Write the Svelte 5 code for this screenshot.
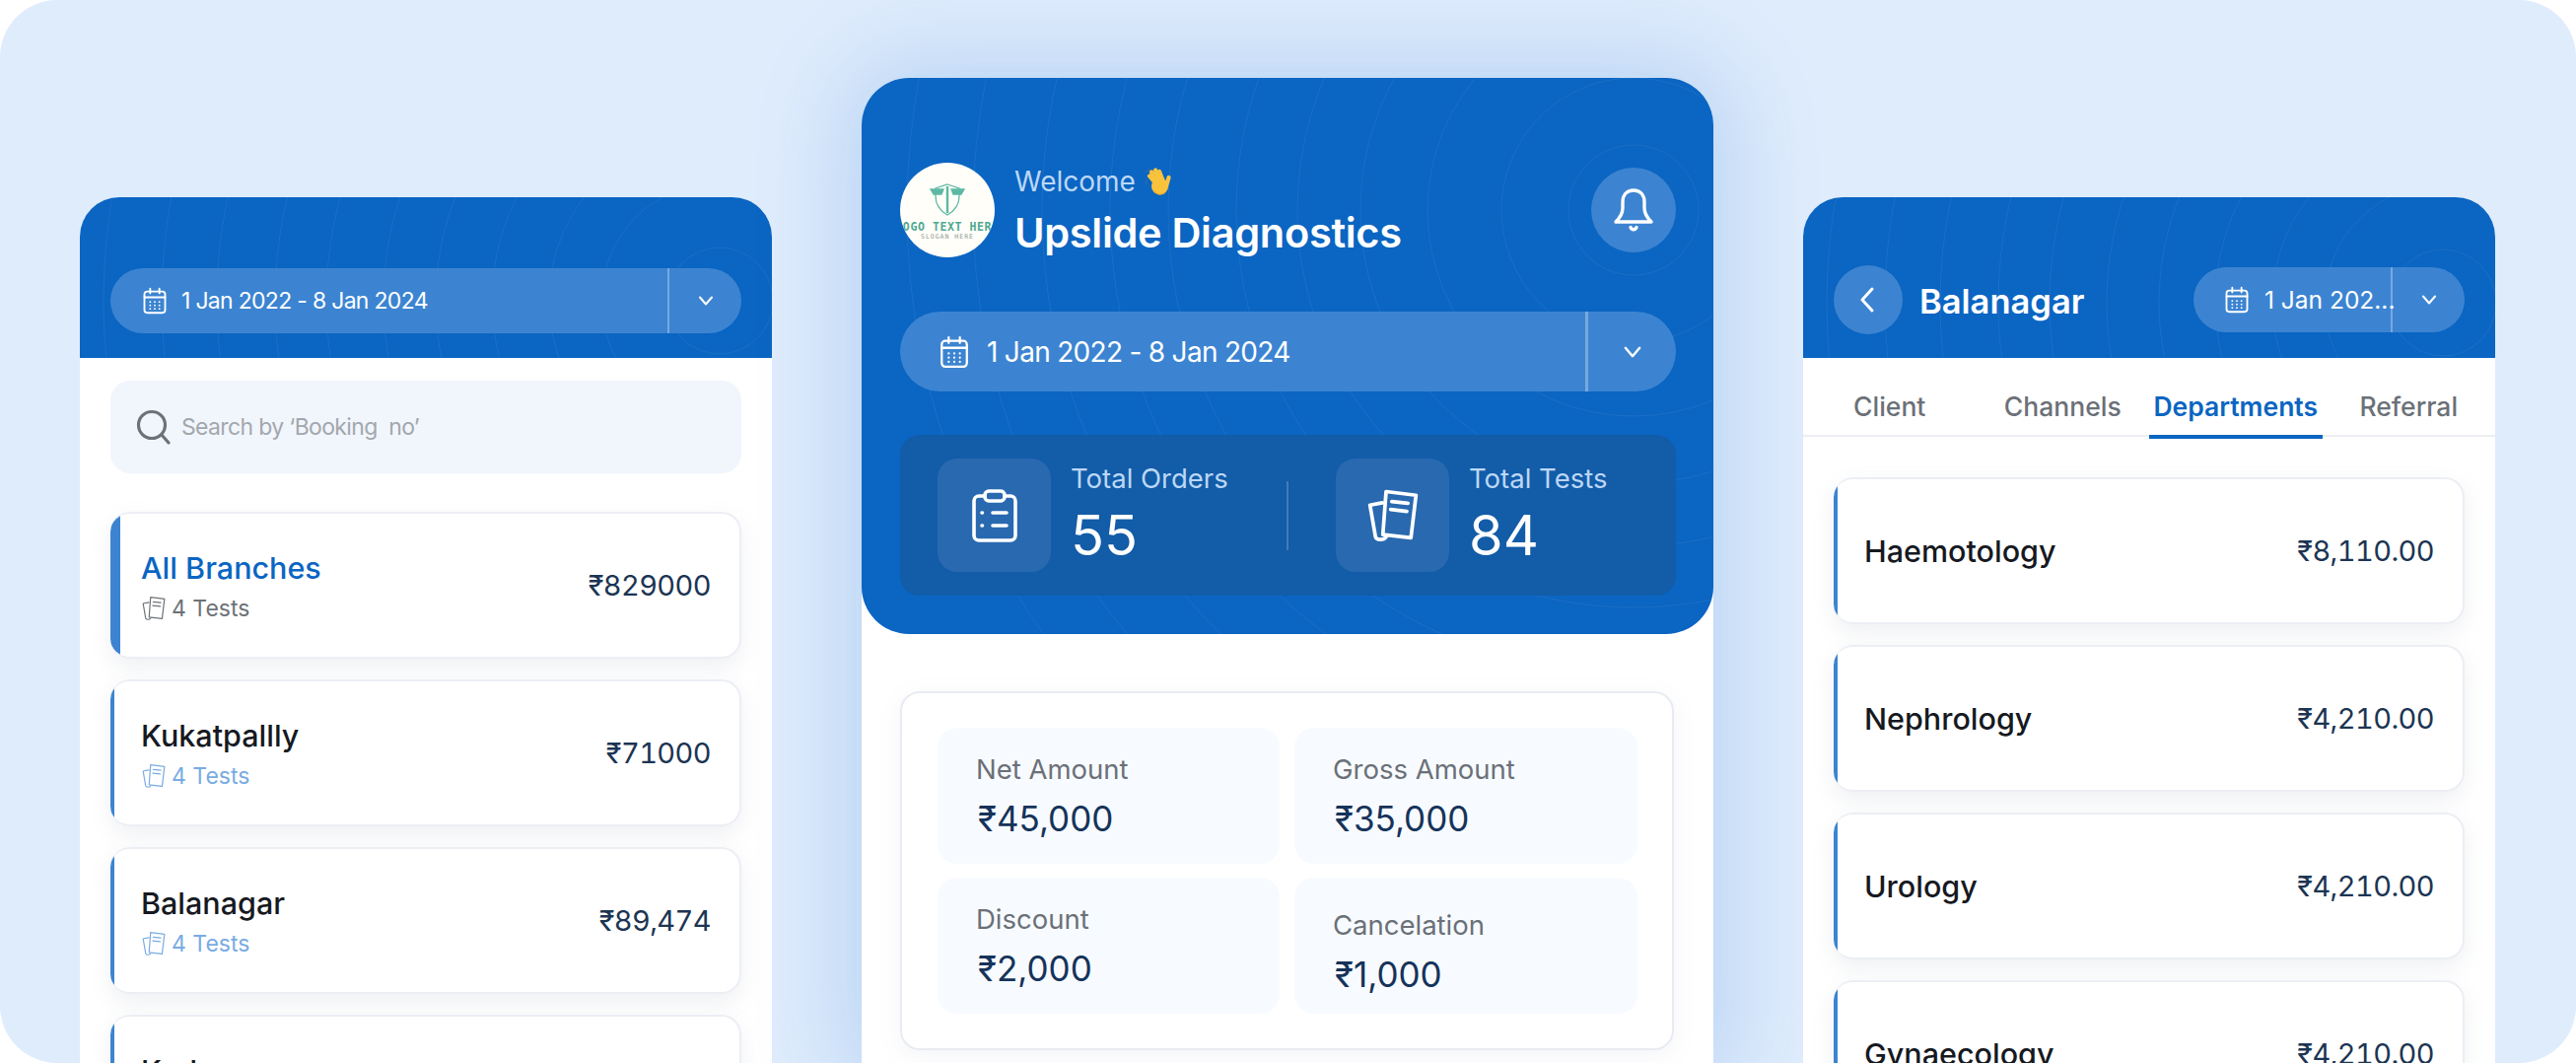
<script>
  const branches = [
    { name: 'All Branches', amount: '₹829000', active: true },
    { name: 'Kukatpallly', amount: '₹71000' },
    { name: 'Balanagar', amount: '₹89,474' },
    { name: 'Kodur', amount: '' }
  ];
  const departments = [
    { name: 'Haemotology', amount: '₹8,110.00' },
    { name: 'Nephrology', amount: '₹4,210.00' },
    { name: 'Urology', amount: '₹4,210.00' },
    { name: 'Gynaecology', amount: '₹4,210.00' }
  ];
  const tabs = ['Client', 'Channels', 'Departments', 'Referral'];
  const amounts = [
    { label: 'Net Amount', value: '₹45,000' },
    { label: 'Gross Amount', value: '₹35,000' },
    { label: 'Discount', value: '₹2,000' },
    { label: 'Cancelation', value: '₹1,000', low: true }
  ];
  const sideRings = [54, 120, 173, 231, 288, 341, 399, 451, 510, 566, 625];
  const mainRings = [66, 134, 209, 277, 341, 403, 472, 531, 600, 670, 737];
</script>

{#snippet calendar(size)}
  <svg class="cal" width={size} height={size} viewBox="0 0 24 24" fill="none" stroke="currentColor" stroke-width="1.6" stroke-linecap="round">
    <rect x="3" y="4" width="18" height="18.5" rx="2.5" />
    <path d="M3 9h18M8 1.5v4M16 1.5v4" />
    <path d="M8 13h.01M12 13h.01M16 13h.01M8 16h.01M12 16h.01M16 16h.01M8 19h.01M12 19h.01M16 19h.01" stroke-width="1.6" />
  </svg>
{/snippet}

{#snippet chevron(size)}
  <svg width={size} height={size} viewBox="0 0 20 20" fill="none" stroke="currentColor" stroke-width="2" stroke-linecap="round" stroke-linejoin="round">
    <path d="M4 6.5l6 7 6-7" />
  </svg>
{/snippet}

{#snippet papers(size, sw)}
  <svg width={size} height={size} viewBox="0 0 24 24" fill="none" stroke="currentColor" stroke-width={sw} stroke-linejoin="round" stroke-linecap="round">
    <path d="M9 1.5l13 1.6-2.2 18.5L7.6 20.2z" />
    <path d="M11.5 5.8l7 .8M11 9.3l7 .8" />
    <path d="M7.4 6.4L2 7.4l2.4 13.8c.3 1.5 3.6 1.6 4.6 0" />
  </svg>
{/snippet}

{#snippet rings(list, cx, cy, w, h)}
  <svg class="rings" width={w} height={h} viewBox={`0 0 ${w} ${h}`} fill="none" stroke="#fff" stroke-opacity=".065">
    {#each list as r}
      <circle {cx} {cy} {r} />
    {/each}
  </svg>
{/snippet}

<div class="frame">
  <section class="phone side">
    <header class="head head-side">
      {@render rings(sideRings, 649, 105, 702, 163)}
      <div class="pill">
        <div class="pill-main">
          {@render calendar(28)}
          <span>1 Jan 2022 - 8 Jan 2024</span>
        </div>
        <div class="pill-arrow">{@render chevron(20)}</div>
      </div>
    </header>
    <div class="body">
      <div class="search">
        <svg width="36" height="36" viewBox="0 0 36 36" fill="none" stroke="#6d7277" stroke-width="3.2" stroke-linecap="round">
          <circle cx="16" cy="16" r="13.5" />
          <path d="M26 26l7 8" />
        </svg>
        <span>Search by ‘Booking&nbsp; no’</span>
      </div>
      <div class="list">
        {#each branches as b}
          <div class="row branch" class:active={b.active}>
            <div>
              <div class="row-name">{b.name}</div>
              <div class="tests">{@render papers(26, 1.1)}<span>4 Tests</span></div>
            </div>
            <div class="row-amount">{b.amount}</div>
          </div>
        {/each}
      </div>
    </div>
  </section>

  <section class="phone main">
    <header class="head head-main">
      {@render rings(mainRings, 783, 134, 864, 564)}
      <div class="top">
        <div class="logo">
          <svg width="36" height="36" viewBox="0 0 36 36" fill="none" stroke="#5db8a3" stroke-width="1.3">
            <path d="M18 2l12 4v8c0 9-5 15-12 19C11 29 6 23 6 14V6z" />
            <path d="M1 7h13l-2 5H4zM35 7H22l2 5h8z" fill="#5db8a3" />
            <path d="M18 4v27" stroke-width="2.4" />
          </svg>
          <span class="logo-name">LOGO TEXT HERE</span>
          <span class="logo-slogan">SLOGAN HERE</span>
        </div>
        <div class="hello">
          <div class="welcome">
            Welcome
            <svg width="28" height="30" viewBox="0 0 28 30" fill="none" stroke-linecap="round">
              <path d="M3 13c-1 2-1 4 0 5M6 3C4 3 3 4 2 6" stroke="#3d6fa8" stroke-width="1" />
              <circle cx="16.5" cy="20" r="8.5" fill="#f9c23c" />
              <path d="M14 19L6 9.5M16 16L8 5.5M18 15l-6-11.5M20 15L16 5M23 20l2.5-9" stroke="#f9c23c" stroke-width="4.2" />
              <path d="M11 25c2 3 6 4 10 2" stroke="#e9a52c" stroke-width="1.2" />
            </svg>
          </div>
          <div class="org">Upslide Diagnostics</div>
        </div>
        <button class="bell" type="button" aria-label="Notifications">
          <svg width="42" height="48" viewBox="0 0 42 48" fill="none" stroke="#fff" stroke-width="3.4" stroke-linejoin="round" stroke-linecap="round">
            <path d="M21 4c-7 0-11 5-11 12v6c0 6-3 10-7 14h36c-4-4-7-8-7-14v-6c0-7-4-12-11-12z" />
            <path d="M18 41.5c1 3 5 3 6 0" />
          </svg>
        </button>
      </div>
      <div class="pill pill-large">
        <div class="pill-main">
          {@render calendar(34)}
          <span>1 Jan 2022 - 8 Jan 2024</span>
        </div>
        <div class="pill-arrow">{@render chevron(24)}</div>
      </div>
      <div class="stats">
        <div class="stat">
          <div class="tile">
            <svg width="46" height="54" viewBox="0 0 46 54" fill="none" stroke="#fff" stroke-width="3.6" stroke-linecap="round" stroke-linejoin="round">
              <path d="M13 7H7a5 5 0 0 0-5 5v35a5 5 0 0 0 5 5h32a5 5 0 0 0 5-5V12a5 5 0 0 0-5-5h-6" />
              <rect x="13" y="2" width="20" height="10" rx="4" />
              <path d="M21 24h14M21 37h14M10 24h.5M10 37h.5" />
            </svg>
          </div>
          <div class="stat-text">
            <div class="stat-label">Total Orders</div>
            <div class="stat-value">55</div>
          </div>
        </div>
        <div class="stat-rule"></div>
        <div class="stat">
          <div class="tile">{@render papers(56, 1.6)}</div>
          <div class="stat-text">
            <div class="stat-label">Total Tests</div>
            <div class="stat-value">84</div>
          </div>
        </div>
      </div>
    </header>
    <div class="summary-wrap">
      <div class="summary">
        {#each amounts as a}
          <div class="amount" class:low={a.low}>
            <div class="amount-label">{a.label}</div>
            <div class="amount-value">{a.value}</div>
          </div>
        {/each}
      </div>
    </div>
  </section>

  <section class="phone side">
    <header class="head head-dept">
      {@render rings(sideRings, 649, 107, 702, 163)}
      <button class="back" type="button" aria-label="Back">
        <svg width="22" height="30" viewBox="0 0 22 30" fill="none" stroke="#fff" stroke-width="3" stroke-linecap="round" stroke-linejoin="round">
          <path d="M15 4L5 15l10 11" />
        </svg>
      </button>
      <div class="dept-title">Balanagar</div>
      <div class="pill pill-small">
        <div class="pill-main">
          {@render calendar(28)}
          <span>1 Jan 202...</span>
        </div>
        <div class="pill-arrow">{@render chevron(20)}</div>
      </div>
    </header>
    <nav class="tabs">
      {#each tabs as t}
        <div class="tab" class:current={t === 'Departments'}>{t}</div>
      {/each}
    </nav>
    <div class="list dept-list">
      {#each departments as d}
        <div class="row">
          <div class="row-name">{d.name}</div>
          <div class="row-amount">{d.amount}</div>
        </div>
      {/each}
    </div>
  </section>
</div>

<style>
  :global(body) {
    margin: 0;
    background: #fff;
  }

  .frame {
    width: 2613px;
    height: 1078px;
    box-sizing: border-box;
    padding: 0 82px 0 81px;
    display: flex;
    justify-content: space-between;
    align-items: flex-start;
    background: #dfecfc;
    border-radius: 58px;
    overflow: hidden;
    font-family: Inter, "Noto Sans", sans-serif;
    color: #16191f;
  }

  .phone {
    position: relative;
    flex: none;
    background: #fff;
    overflow: hidden;
    border-radius: 40px 40px 0 0;
  }
  .side {
    width: 702px;
    height: 878px;
    margin-top: 200px;
  }
  .main {
    width: 864px;
    height: 999px;
    margin-top: 79px;
    border-radius: 48px 48px 0 0;
    overflow: visible;
    box-shadow: 0 0 90px 20px rgba(40, 120, 215, 0.2);
  }

  .head {
    position: relative;
    background: #0b65c2;
    overflow: hidden;
    box-sizing: border-box;
  }
  .head > :global(*) {
    position: relative;
  }
  .head > :global(.rings) {
    position: absolute;
    left: 0;
    top: 0;
  }
  .head-side {
    height: 163px;
    padding: 72px 31px 0;
  }
  .head-main {
    height: 564px;
    padding: 86px 38px 0 39px;
    border-radius: 48px;
  }
  .head-dept {
    height: 163px;
    padding: 69px 31px 0;
    display: flex;
    align-items: flex-start;
  }

  .pill {
    display: flex;
    height: 66px;
    border-radius: 33px;
    background: #3c84d1;
    color: #fff;
    font-size: 23px;
    letter-spacing: -0.7px;
  }
  .pill-main {
    flex: 1;
    min-width: 0;
    display: flex;
    align-items: center;
    gap: 13px;
    padding-left: 31px;
    white-space: nowrap;
  }
  .pill-arrow {
    flex: none;
    width: 75px;
    box-sizing: border-box;
    border-left: 2px solid rgba(255, 255, 255, 0.3);
    display: flex;
    align-items: center;
    justify-content: center;
  }
  .pill-large {
    height: 81px;
    border-radius: 41px;
    font-size: 28px;
    margin-top: 55px;
  }
  .pill-large .pill-main {
    padding-left: 38px;
    gap: 16px;
  }
  .pill-large .pill-arrow {
    width: 92px;
    border-left-width: 3px;
  }
  .pill-small {
    width: 275px;
    margin-left: auto;
    margin-top: 2px;
    font-size: 24.5px;
    letter-spacing: 0;
  }
  .pill-small .pill-main {
    padding-left: 30px;
    gap: 14px;
  }
  .cal {
    flex: none;
  }

  .top {
    display: flex;
    align-items: center;
    height: 96px;
  }
  .logo {
    flex: none;
    width: 96px;
    height: 96px;
    border-radius: 50%;
    background: #fffef8;
    overflow: hidden;
    display: flex;
    flex-direction: column;
    align-items: center;
    padding-top: 20px;
    box-sizing: border-box;
    white-space: nowrap;
  }
  .logo-name {
    font-family: "DejaVu Sans Mono", monospace;
    font-size: 11.5px;
    font-weight: 700;
    line-height: 12px;
    letter-spacing: 0.6px;
    color: #4fa893;
    margin-top: 3px;
  }
  .logo-slogan {
    font-family: "DejaVu Sans Mono", monospace;
    font-size: 6.5px;
    line-height: 8px;
    letter-spacing: 1px;
    color: #8f9a97;
  }
  .hello {
    margin-left: 20px;
  }
  .welcome {
    display: flex;
    align-items: center;
    gap: 8px;
    font-size: 28px;
    line-height: 36px;
    color: #bcd7f6;
  }
  .org {
    margin-top: 9px;
    font-size: 41.5px;
    line-height: 50px;
    font-weight: 600;
    letter-spacing: -0.3px;
    color: #fff;
  }
  .bell {
    margin-left: auto;
    width: 86px;
    height: 86px;
    padding: 0;
    border: 0;
    border-radius: 50%;
    background: #3c84d1;
    display: flex;
    align-items: center;
    justify-content: center;
  }

  .stats {
    margin-top: 44px;
    height: 163px;
    border-radius: 20px;
    background: #125ca8;
    display: flex;
    align-items: center;
    padding: 0 38px;
  }
  .stat {
    display: flex;
    align-items: center;
    gap: 20px;
  }
  .stat:first-child {
    width: 354px;
  }
  .stat-text {
    padding-bottom: 3px;
  }
  .stat-rule {
    width: 2px;
    height: 70px;
    background: rgba(255, 255, 255, 0.2);
    margin-right: 48px;
  }
  .tile {
    flex: none;
    width: 115px;
    height: 115px;
    border-radius: 20px;
    background: #2969b0;
    color: #fff;
    display: flex;
    align-items: center;
    justify-content: center;
  }
  .stat-label {
    font-size: 27.5px;
    line-height: 36px;
    color: #bcd7f6;
  }
  .stat-value {
    font-size: 56px;
    line-height: 64px;
    margin-top: 8px;
    color: #fff;
  }

  .summary-wrap {
    padding: 58px 40px 0 39px;
  }
  .summary {
    box-sizing: border-box;
    height: 364px;
    padding: 35px 36px 0;
    border: 2px solid #e8ebf2;
    border-radius: 20px;
    background: #fff;
    box-shadow: 0 6px 24px rgba(120, 130, 160, 0.08);
    display: grid;
    grid-template-columns: 347px 348px;
    grid-template-rows: 138px 138px;
    column-gap: 15px;
    row-gap: 14px;
  }
  .amount {
    box-sizing: border-box;
    padding: 24px 39px 0;
    background: #f7fbff;
    border-radius: 20px;
  }
  .amount.low {
    padding-top: 30px;
  }
  .amount-label {
    font-size: 27.5px;
    line-height: 36px;
    color: #6b7078;
  }
  .amount-value {
    margin: 10px 0 0 2px;
    font-size: 35px;
    line-height: 44px;
    color: #16335a;
  }

  .body {
    padding: 23px 31px 0;
  }
  .search {
    height: 94px;
    box-sizing: border-box;
    padding-left: 26px;
    border-radius: 20px;
    background: #f1f6fd;
    display: flex;
    align-items: center;
    gap: 10px;
    font-size: 23px;
    letter-spacing: -0.65px;
    color: #a3a7ac;
  }
  .list {
    display: flex;
    flex-direction: column;
    gap: 21px;
    margin-top: 39px;
  }
  .dept-list {
    margin: 41px 31px 0;
  }
  .row {
    flex: none;
    box-sizing: border-box;
    height: 149px;
    padding: 0 29px 0 31px;
    border: 2px solid #eceef4;
    border-left: 0;
    border-radius: 20px;
    background: linear-gradient(90deg, #3c84d1 4px, #fff 4px);
    box-shadow: 0 8px 22px rgba(120, 130, 160, 0.12);
    display: flex;
    align-items: center;
    justify-content: space-between;
  }
  .branch.active {
    background: linear-gradient(90deg, #3c84d1 10px, #fff 10px);
  }
  .row-name {
    font-size: 30.5px;
    line-height: 40px;
    font-weight: 500;
  }
  .row-amount {
    font-size: 29px;
    letter-spacing: -0.6px;
    font-variant-numeric: tabular-nums;
    color: #1c3553;
  }
  .active .row-name {
    color: #0b65c2;
  }
  .tests {
    display: flex;
    align-items: center;
    gap: 5px;
    margin-top: 7px;
    font-size: 23px;
    line-height: 28px;
    color: #79abe3;
  }
  .active .tests {
    color: #6d7277;
  }

  .back {
    flex: none;
    width: 70px;
    height: 70px;
    padding: 0;
    border: 0;
    border-radius: 50%;
    background: #3c84d1;
    display: flex;
    align-items: center;
    justify-content: center;
  }
  .dept-title {
    margin-left: 17px;
    font-size: 34.5px;
    line-height: 74px;
    font-weight: 600;
    color: #fff;
  }

  .tabs {
    height: 80px;
    box-sizing: border-box;
    border-bottom: 2px solid #eceef1;
    display: grid;
    grid-template-columns: repeat(4, 1fr);
    font-size: 26.5px;
    color: #6b7078;
  }
  .tab {
    position: relative;
    line-height: 98px;
    height: 82px;
    text-align: center;
    font-weight: 500;
  }
  .tab.current {
    color: #0b65c2;
    font-weight: 600;
  }
  .tab.current::after {
    content: "";
    position: absolute;
    left: 0;
    right: 0;
    bottom: 0;
    height: 4px;
    background: #0b65c2;
  }
</style>
